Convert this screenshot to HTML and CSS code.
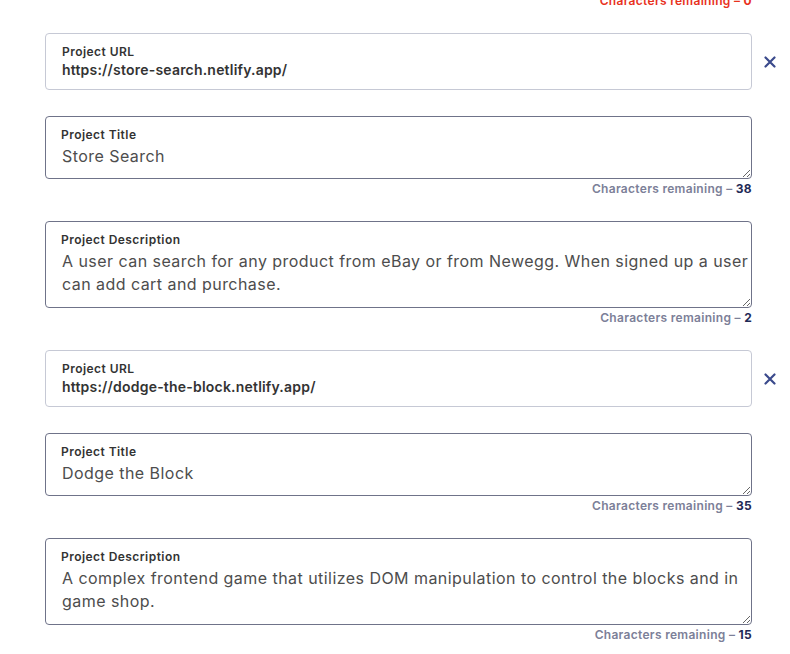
FILE: index.html
```html
<!DOCTYPE html>
<html>
<head>
<meta charset="utf-8">
<link rel="stylesheet" href="styles.css">
</head>
<body>
<div class="page">
  <div class="count count-error">Characters remaining – <b>0</b></div>

  <div class="url-row">
    <div class="url-box">
      <div class="label">Project URL</div>
      <div class="url-value">https://store-search.netlify.app/</div>
    </div>
    <button class="remove" aria-label="Remove">
      <svg width="12" height="12" viewBox="0 0 12 12"><path d="M1.5 1.5 L10.5 10.5 M10.5 1.5 L1.5 10.5" stroke="#3b4a8c" stroke-width="2.2" stroke-linecap="round"/></svg>
    </button>
  </div>
  <div class="field field-title">
    <label class="label float">Project Title</label>
    <textarea class="area area-title">Store Search</textarea>
  </div>
  <div class="count">Characters remaining – <b>38</b></div>
  <div class="field field-desc">
    <label class="label float">Project Description</label>
    <textarea class="area area-desc">A user can search for any product from eBay or from Newegg. When signed up a user
can add cart and purchase.</textarea>
  </div>
  <div class="count">Characters remaining – <b>2</b></div>

  <div class="url-row">
    <div class="url-box">
      <div class="label">Project URL</div>
      <div class="url-value">https://dodge-the-block.netlify.app/</div>
    </div>
    <button class="remove" aria-label="Remove">
      <svg width="12" height="12" viewBox="0 0 12 12"><path d="M1.5 1.5 L10.5 10.5 M10.5 1.5 L1.5 10.5" stroke="#3b4a8c" stroke-width="2.2" stroke-linecap="round"/></svg>
    </button>
  </div>
  <div class="field field-title">
    <label class="label float">Project Title</label>
    <textarea class="area area-title">Dodge the Block</textarea>
  </div>
  <div class="count">Characters remaining – <b>35</b></div>
  <div class="field field-desc">
    <label class="label float">Project Description</label>
    <textarea class="area area-desc">A complex frontend game that utilizes DOM manipulation to control the blocks and in
game shop.</textarea>
  </div>
  <div class="count">Characters remaining – <b>15</b></div>
</div>
</body>
</html>
```

FILE: styles.css
```css
* { box-sizing: border-box; }
html, body { margin: 0; padding: 0; background: #ffffff; overflow: hidden; }
body { font-family: "Inter", "Open Sans", sans-serif; color: #333; }

.page {
  width: 707px;
  margin: -9px 0 0 45px;
}

.count {
  height: 16px;
  line-height: 16px;
  margin: 2px 0 24px;
  text-align: right;
  font-size: 12px;
  letter-spacing: 0.3px;
  font-weight: 600;
  color: #7c8098;
}
.count b { font-weight: 700; color: #1f2a56; }
.count-error, .count-error b { color: #e8321e; }

.url-row {
  display: flex;
  align-items: center;
  width: 743px;
  margin-bottom: 26px;
}
.url-box {
  width: 707px;
  height: 57px;
  border: 1px solid #c6c9d5;
  border-radius: 4px;
  padding: 11px 16px 0;
}
.label {
  display: block;
  font-size: 12px;
  letter-spacing: 0.45px;
  line-height: 14px;
  font-weight: 600;
  color: #333333;
}
.url-value {
  font-size: 14px;
  letter-spacing: 0.2px;
  line-height: 22px;
  font-weight: 600;
  color: #333333;
}
.remove {
  width: 36px;
  height: 36px;
  border: 0;
  background: transparent;
  padding: 0;
  display: flex;
  align-items: center;
  justify-content: center;
}

.field { position: relative; }
.float {
  position: absolute;
  left: 16px;
  top: 12px;
}
.area {
  display: block;
  width: 707px;
  margin: 0;
  border: 1px solid #6f7389;
  border-radius: 4px;
  padding: 28px 0 0 16px;
  font-family: inherit;
  font-size: 16px;
  letter-spacing: 0.45px;
  line-height: 23px;
  color: #4d4d4d;
  white-space: pre;
  overflow: hidden;
  resize: vertical;
  background: #fff;
}
.area-title { height: 63px; }
.area-desc { height: 87px; }
```
